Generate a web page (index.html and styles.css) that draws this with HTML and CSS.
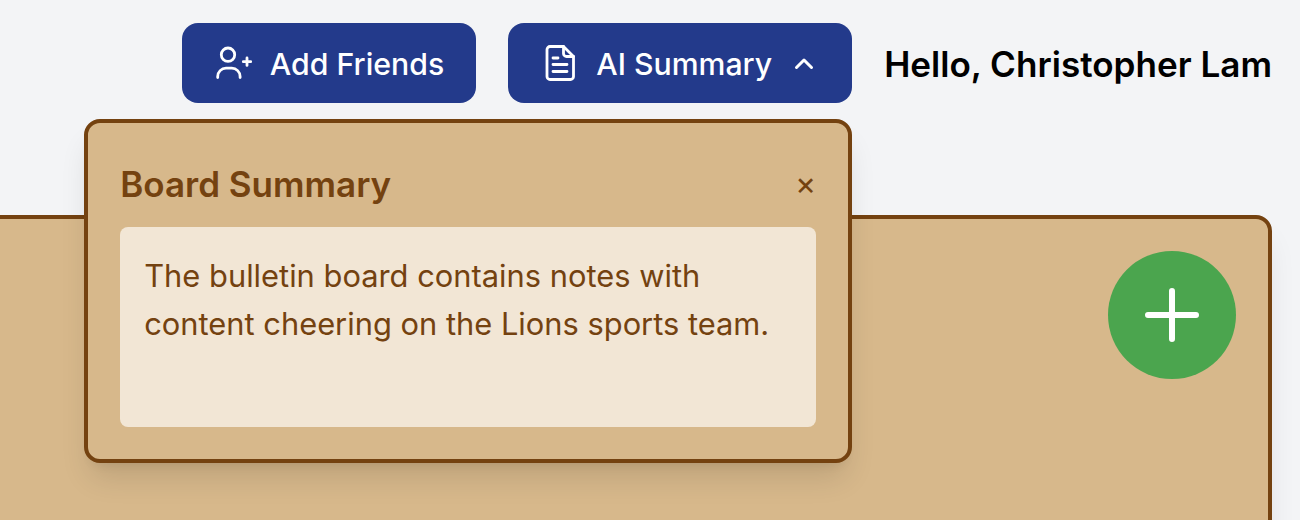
FILE: index.html

```html
<!DOCTYPE html>
<html lang="en">
<head>
  <meta charset="UTF-8">
  <title>Bulletin Board</title>
  <link rel="stylesheet" href="styles.css">
</head>
<body>

<div class="header">
  <button class="nav-btn">
    <svg class="icon" viewBox="0 0 40 40">
      <circle cx="14" cy="11.7" r="6.7"/>
      <path d="M3.700 34.600v-1.100a8.300 8.300 0 0 1 8.300-8.300h5.800a8.300 8.300 0 0 1 8.300 8.300v1.100"/>
      <path d="M33 15v7.400M29.300 18.700h7.400"/>
    </svg>
    <span class="nav-label">Add Friends</span>
  </button>

  <div class="summary-wrap">
    <button class="nav-btn">
      <svg class="icon" viewBox="0 0 40 40">
        <path d="M10 3.500h13.500l10 10v20a3 3 0 0 1-3 3H10a3 3 0 0 1-3-3v-27a3 3 0 0 1 3-3z"/>
        <path d="M23.500 3.500v7a3 3 0 0 0 3 3h7"/>
        <path d="M13 15h5M13 21.500h14M13 28.500h14"/>
      </svg>
      <span class="nav-label">AI Summary</span>
      <svg class="chevron" viewBox="0 0 32 32">
        <path d="M8.500 20.500l7.500-7.500 7.500 7.500"/>
      </svg>
    </button>

    <div class="popup">
      <div class="popup-head">
        <h3>Board Summary</h3>
        <span class="close">×</span>
      </div>
      <div class="popup-body">The bulletin board contains notes with content cheering on the Lions sports team.</div>
    </div>
  </div>

  <span class="greeting">Hello, Christopher Lam</span>
</div>

<div class="board">
  <button class="add-btn">
    <svg viewBox="0 0 56 56">
      <path d="M28 4v48M4 28h48"/>
    </svg>
  </button>
</div>

</body>
</html>
```

FILE: styles.css

```css
body {
  margin: 0;
  height: 520px;
  overflow: hidden;
  background: #f3f4f6;
  font-family: Inter, sans-serif;
}
.header {
  display: flex;
  justify-content: flex-end;
  align-items: center;
  gap: 32px;
  height: 80px;
  padding: 23px 28px 112px 0;
}
.nav-btn {
  display: flex;
  align-items: center;
  gap: 16px;
  height: 80px;
  padding: 0 32px;
  background: #233a8b;
  color: white;
  font-family: inherit;
  font-size: 30.25px;
  font-weight: 500;
  border: none;
  border-radius: 16px;
}
.nav-label {
  margin-top: 2px;
}
.icon {
  width: 40px;
  height: 40px;
  fill: none;
  stroke: white;
  stroke-width: 2.8;
  stroke-linecap: round;
  stroke-linejoin: round;
}
.chevron {
  width: 32px;
  height: 32px;
  fill: none;
  stroke: white;
  stroke-width: 3;
  stroke-linecap: round;
  stroke-linejoin: round;
}
.summary-wrap {
  position: relative;
}
.greeting {
  margin-top: 2px;
  font-size: 35.1px;
  font-weight: 600;
  color: black;
}
.popup {
  position: absolute;
  top: 96px;
  right: 0;
  z-index: 2;
  box-sizing: border-box;
  width: 768px;
  padding: 32px;
  background: #d7b88b;
  border: 4px solid #744210;
  border-radius: 16px;
  box-shadow: 0 20px 30px -6px rgba(0,0,0,0.12), 0 8px 12px -8px rgba(0,0,0,0.1);
}
.popup-head {
  display: flex;
  justify-content: space-between;
  align-items: center;
  height: 60px;
  margin-bottom: 12px;
}
.popup-head h3 {
  margin: -2px 0 0;
  font-size: 35px;
  font-weight: 600;
  color: #744210;
}
.close {
  margin-top: -4px;
  font-size: 32px;
  color: #744210;
}
.popup-body {
  box-sizing: border-box;
  height: 200px;
  padding: 25px 24px 0;
  background: #f2e6d5;
  border-radius: 8px;
  color: #744210;
  font-size: 30.85px;
  line-height: 48px;
}
.board {
  position: relative;
  height: 400px;
  margin: 0 28px 0 -40px;
  background: #d7b88b;
  border: 4px solid #744210;
  border-radius: 16px;
  box-shadow: 0 20px 30px -6px rgba(0,0,0,0.1);
}
.add-btn {
  position: absolute;
  top: 32px;
  right: 32px;
  display: flex;
  justify-content: center;
  align-items: center;
  width: 128px;
  height: 128px;
  padding: 0;
  background: #4ba54e;
  border: none;
  border-radius: 50%;
}
.add-btn svg {
  width: 56px;
  height: 56px;
  fill: none;
  stroke: white;
  stroke-width: 6;
  stroke-linecap: round;
}
```
